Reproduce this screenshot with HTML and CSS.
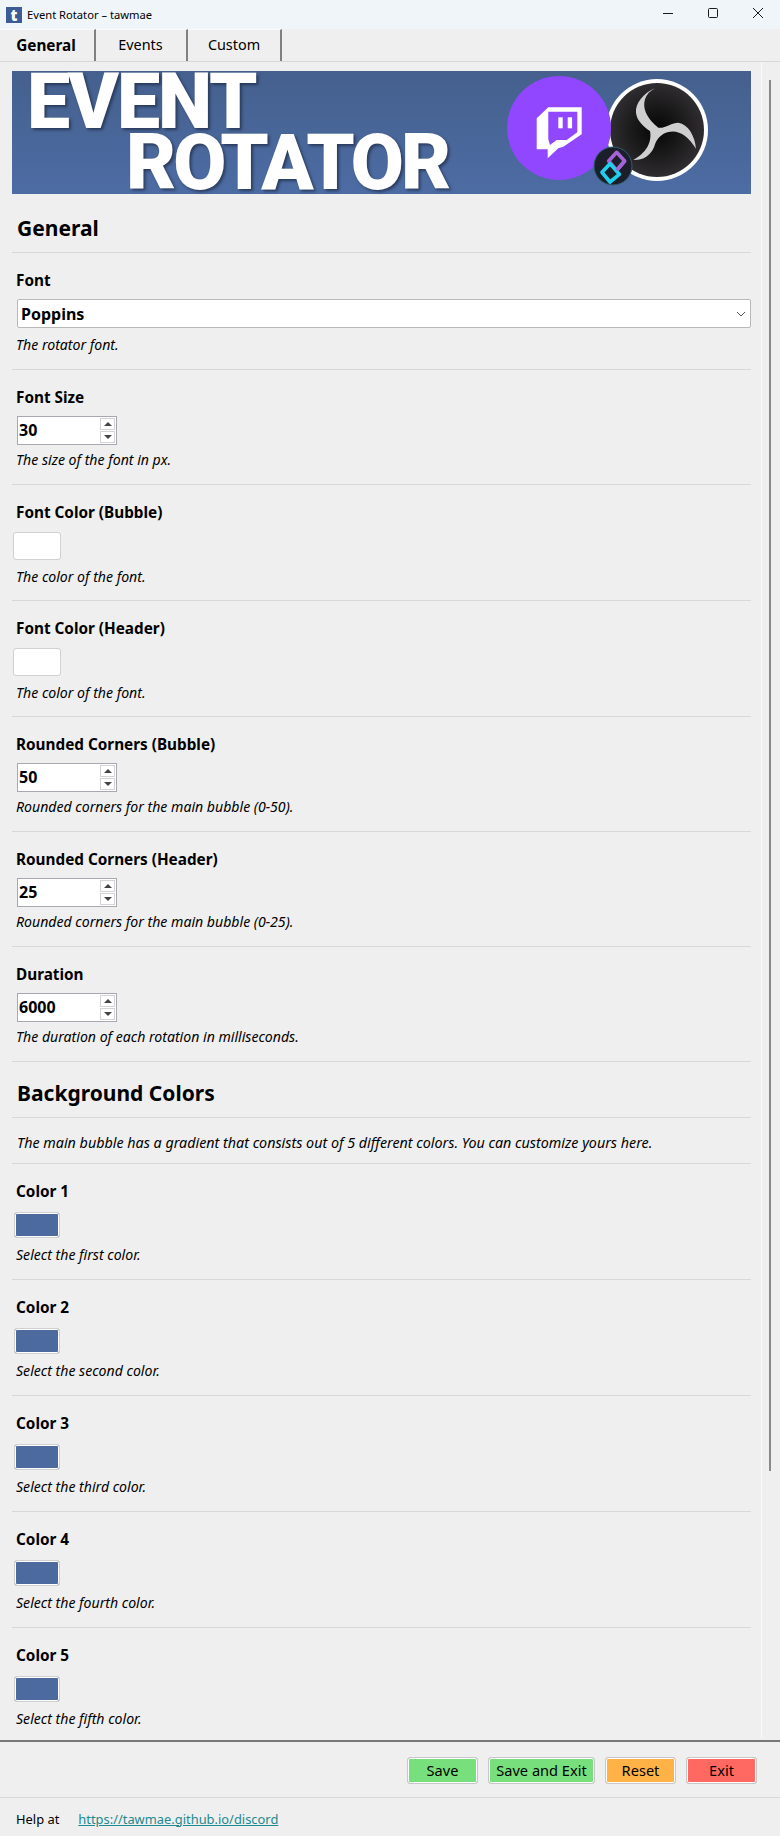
FILE: index.html
```html
<!DOCTYPE html>
<html lang="en">
<head>
	<meta charset="UTF-8">
	<title>Event Rotator</title>
	<link rel="stylesheet" href="styles.css">
</head>
<body>
	<div class="titlebar">
		<span class="appicon">t</span>
		<span class="apptitle">Event Rotator – tawmae</span>
		<svg class="winbtns" width="120" height="29" viewBox="0 0 120 29" fill="none" stroke="#1a1a1a" stroke-width="1">
			<path d="M3 13.5H13"/>
			<rect x="48.5" y="8.5" width="9" height="9" rx="1"/>
			<path d="M93 8L103 18M103 8L93 18"/>
		</svg>
	</div>
	<div class="tabs">
		<div class="tab tab-general current">General</div>
		<div class="tab tab-events">Events</div>
		<div class="tab tab-custom">Custom</div>
	</div>
	<div class="main">
		<div class="content">
			<div class="banner">
				<div class="bannertext">
					<div class="line1">EVENT</div>
					<div class="line2">ROTATOR</div>
				</div>
				<svg class="logos" width="261" height="123" viewBox="0 0 261 123">
					<defs>
						<radialGradient id="obsdark">
							<stop offset="0" stop-color="#050505"/>
							<stop offset="1" stop-color="#2f2d2f"/>
						</radialGradient>
					</defs>
					<circle cx="167" cy="59" r="51" fill="#fff"/>
					<circle cx="167" cy="59" r="47" fill="url(#obsdark)"/>
					<g transform="translate(110 5) scale(.3333)">
						<path fill="#cfcfcf" d="M165 37C130 50 105 85 108 110C110 135 135 155 150 165C155 190 148 225 100 252C140 255 160 225 165 205C170 190 185 172 205 168C235 160 265 180 288 218C285 180 265 145 235 140C215 140 195 158 175 155C150 135 125 105 135 70C140 55 150 45 165 37Z"/>
					</g>
					<circle cx="69" cy="57" r="52" fill="#9146ff"/>
					<path fill="#fff" fill-rule="evenodd" d="M58.3 36.3H91.7V63.3L73.3 75.7L68.3 77.3L57.7 87.3V78.3H46.7V47.3ZM58.3 40.7V68.3L60 74L66.7 69H76.7L87.3 61.3V40.7Z"/>
					<rect x="68.3" y="46.3" width="4.4" height="11" fill="#fff"/>
					<rect x="77.7" y="46.3" width="4.4" height="11" fill="#fff"/>
					<circle cx="123" cy="95" r="19" fill="#1c1e2a" stroke="#2b5f74" stroke-width="1"/>
					<g transform="translate(110 4) scale(.3333)" fill="none" stroke-width="11" stroke-linejoin="round">
						<path stroke="#a564d6" d="M50 232L74 258L50 286L26 258Z"/>
						<path stroke="#1fd0ef" d="M30 266L58 298L30 321L6 292Z"/>
						<path stroke="#a564d6" d="M74 258L50 286"/>
					</g>
				</svg>
			</div>
			<h2 class="section section-first">General</h2>
			<div class="item item-select">
				<div class="label">Font</div>
				<div class="select">Poppins
					<svg class="chev" width="10" height="6" viewBox="0 0 10 6" fill="none" stroke="#555" stroke-width="1"><path d="M1 1L5 5L9 1"/></svg>
				</div>
				<div class="desc">The rotator font.</div>
			</div>
			<div class="item">
				<div class="label">Font Size</div>
				<div class="number">30<span class="spin"><i class="up"></i><i class="down"></i></span></div>
				<div class="desc">The size of the font in px.</div>
			</div>
			<div class="item item-color">
				<div class="label">Font Color (Bubble)</div>
				<div class="swatch swatch-white"></div>
				<div class="desc">The color of the font.</div>
			</div>
			<div class="item item-color">
				<div class="label">Font Color (Header)</div>
				<div class="swatch swatch-white"></div>
				<div class="desc">The color of the font.</div>
			</div>
			<div class="item">
				<div class="label">Rounded Corners (Bubble)</div>
				<div class="number">50<span class="spin"><i class="up"></i><i class="down"></i></span></div>
				<div class="desc">Rounded corners for the main bubble (0-50).</div>
			</div>
			<div class="item">
				<div class="label">Rounded Corners (Header)</div>
				<div class="number">25<span class="spin"><i class="up"></i><i class="down"></i></span></div>
				<div class="desc">Rounded corners for the main bubble (0-25).</div>
			</div>
			<div class="item">
				<div class="label">Duration</div>
				<div class="number">6000<span class="spin"><i class="up"></i><i class="down"></i></span></div>
				<div class="desc">The duration of each rotation in milliseconds.</div>
			</div>
			<h2 class="section">Background Colors</h2>
			<div class="intro">The main bubble has a gradient that consists out of 5 different colors. You can customize yours here.</div>
			<div class="item item-color">
				<div class="label">Color 1</div>
				<div class="swatch"></div>
				<div class="desc">Select the first color.</div>
			</div>
			<div class="item item-color">
				<div class="label">Color 2</div>
				<div class="swatch"></div>
				<div class="desc">Select the second color.</div>
			</div>
			<div class="item item-color">
				<div class="label">Color 3</div>
				<div class="swatch"></div>
				<div class="desc">Select the third color.</div>
			</div>
			<div class="item item-color">
				<div class="label">Color 4</div>
				<div class="swatch"></div>
				<div class="desc">Select the fourth color.</div>
			</div>
			<div class="item item-color item-last">
				<div class="label">Color 5</div>
				<div class="swatch"></div>
				<div class="desc">Select the fifth color.</div>
			</div>
		</div>
		<div class="scrolltrack"><div class="thumb"></div></div>
	</div>
	<div class="actions">
		<div class="btn btn-save">Save</div>
		<div class="btn btn-saveexit">Save and Exit</div>
		<div class="btn btn-reset">Reset</div>
		<div class="btn btn-exit">Exit</div>
	</div>
	<div class="help">
		<span class="helptext">Help at</span>
		<a class="helplink" href="#">https://tawmae.github.io/discord</a>
	</div>
</body>
</html>
```
FILE: styles.css
```css
*{
	margin: 0px;
	padding: 0px;
	box-sizing: border-box;
}
html, body{
	height: 1836px;
	overflow: hidden;
}
body{
	background: #efefef;
	color: #000;
	font-family: "Noto Sans", "Open Sans", sans-serif;
	font-size: 14px;
}
.titlebar{
	height: 29px;
	background: #f0f5fa;
	display: flex;
	align-items: center;
	padding-left: 6px;
}
.appicon{
	width: 16px;
	height: 16px;
	background: #3b5c96;
	color: #fff;
	font-weight: 900;
	font-size: 15px;
	line-height: 16px;
	text-align: center;
}
.apptitle{
	margin-left: 5px;
	font-size: 11.2px;
}
.winbtns{
	margin-left: auto;
}
.tabs{
	height: 33px;
	display: flex;
	border-bottom: 1px solid #d8d8d8;
}
.tab{
	height: 32px;
	line-height: 30px;
	text-align: center;
	font-size: 14.4px;
	border-right: 2px solid #808080;
	border-top: 1px solid #fafafa;
}
.tab-general{
	width: 96px;
	padding-right: 2px;
	font-size: 15.3px;
}
.tab-events{
	width: 92px;
	padding-right: 1px;
}
.tab-custom{
	width: 94px;
}
.current{
	font-weight: 700;
}
.main{
	height: 1678px;
	display: flex;
}
.content{
	width: 762px;
	height: 1676px;
	padding: 9px 10px 0 12px;
	border-right: 1px solid #fafafa;
}
.banner{
	height: 123px;
	display: flex;
	justify-content: space-between;
	background: linear-gradient(#45608d, #4d6ca4);
}
.bannertext{
	padding-top: 1px;
	color: #fff;
	font-family: Roboto, sans-serif;
	font-weight: 900;
	font-size: 77px;
	line-height: 61px;
	text-shadow: 2px 2px 3px rgba(20, 30, 50, .6);
}
.line1{
	margin-left: 15px;
	letter-spacing: -2px;
}
.line2{
	margin-left: 114px;
	letter-spacing: -3px;
}
.section{
	height: 56px;
	padding: 16px 0 0 5px;
	line-height: 30px;
	font-size: 21px;
	font-weight: 700;
	border-bottom: 1px solid #d8d8d8;
}
.section-first{
	height: 59px;
	padding-top: 19px;
}
.item{
	padding: 16px 0 15px 4px;
	height: 115px;
	border-bottom: 1px solid #d8d8d8;
}
.item-select{
	height: 117px;
}
.item-color{
	height: 116px;
	padding-left: 2px;
}
.item-last{
	border-bottom: 0;
}
.label{
	height: 22px;
	line-height: 22px;
	font-size: 15.3px;
	font-weight: 700;
}
.item-color .label{
	padding-left: 2px;
}
.select{
	position: relative;
	height: 29px;
	margin: 8px 0 8px 1px;
	padding-left: 3px;
	line-height: 28px;
	font-size: 16px;
	font-weight: 700;
	background: #fff;
	border: 1px solid #b8b8b8;
	border-radius: 2px;
}
.chev{
	position: absolute;
	right: 4px;
	top: 11px;
}
.number{
	position: relative;
	width: 100px;
	height: 29px;
	margin: 8px 0 6px 1px;
	padding-left: 1px;
	line-height: 26px;
	font-size: 16px;
	font-weight: 700;
	background: #fff;
	border: 1px solid #a8a8b0;
}
.spin{
	position: absolute;
	right: 1px;
	top: 1px;
	width: 15px;
	display: flex;
	flex-direction: column;
	gap: 1px;
}
.spin i{
	display: block;
	height: 12px;
	border: 1px solid #d4d4d4;
	position: relative;
}
.spin i:after{
	content: "";
	position: absolute;
	left: 3px;
	top: 3px;
	border-left: 4px solid transparent;
	border-right: 4px solid transparent;
}
.up:after{
	border-bottom: 4px solid #444;
}
.down:after{
	border-top: 4px solid #444;
}
.swatch{
	width: 46px;
	height: 26px;
	margin: 10px 0 8px 0;
	background: #4d6a9f;
	border: 1px solid #d0d0d0;
	box-shadow: inset 0 0 0 1px #fff;
	border-radius: 3px;
}
.swatch-white{
	width: 48px;
	height: 28px;
	margin: 9px 0 8px -1px;
	background: #fff;
}
.desc{
	height: 18px;
	line-height: 18px;
	font-size: 14.1px;
	font-style: italic;
}
.item-color .desc{
	padding-left: 2px;
}
.intro{
	height: 46px;
	padding: 15px 0 0 5px;
	line-height: 20px;
	font-size: 14.3px;
	font-style: italic;
	border-bottom: 1px solid #d8d8d8;
}
.scrolltrack{
	flex: 1;
	padding: 18px 0 0 7px;
}
.thumb{
	width: 2px;
	height: 1391px;
	background: #8a8a8a;
}
.actions{
	height: 58px;
	padding: 15px 23px 0 0;
	display: flex;
	justify-content: flex-end;
	gap: 10px;
	border-top: 2px solid #777;
	border-bottom: 1px solid #d8d8d8;
}
.btn{
	width: 71px;
	height: 27px;
	line-height: 25px;
	text-align: center;
	font-size: 14.6px;
	border: 1px solid #c8c8c8;
	box-shadow: inset 0 0 0 1px #fff;
	border-radius: 3px;
}
.btn-saveexit{
	width: 107px;
}
.btn-save, .btn-saveexit{
	background: #77e07c;
}
.btn-reset{
	background: #ffb347;
}
.btn-exit{
	background: #ff6961;
}
.help{
	height: 37px;
	padding: 4px 0 0 16px;
	display: flex;
	align-items: center;
	font-size: 12.9px;
}
.helplink{
	margin-left: 19px;
	color: #1c8a90;
}
```
